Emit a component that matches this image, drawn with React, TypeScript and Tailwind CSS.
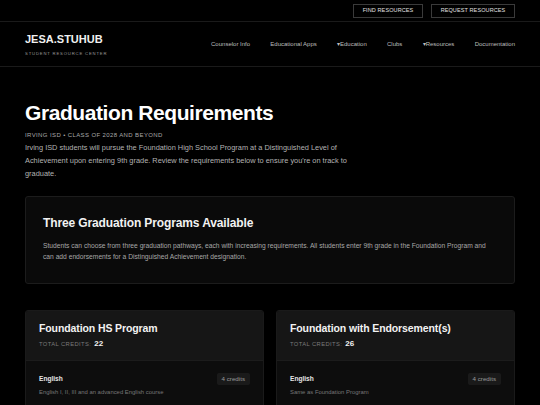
import React from "react";

const font = { fontFamily: '"Liberation Sans", Arial, sans-serif' };

function ProgramCard({ title, credits, desc }: { title: string; credits: string; desc: string }) {
  return (
    <div className="flex-1 rounded-[3px] overflow-hidden border border-[#1a1a1a] bg-[#0d0d0d]">
      <div className="bg-[#161616] px-[13px] pt-[11px] pb-[11px] border-b border-[#1c1c1c]">
        <div className="text-[10.5px] font-bold tracking-[-0.01em] text-[#f2f2f2] leading-[13px]">{title}</div>
        <div className="mt-[4px] flex items-baseline gap-[3px] leading-[10px]">
          <span className="text-[5.8px] tracking-[0.07em] text-[#7a7a7a]">TOTAL CREDITS:</span>
          <span className="text-[8px] font-bold text-[#f2f2f2]">{credits}</span>
        </div>
      </div>
      <div className="px-[13px] pt-[12px] pb-[10px]">
        <div className="flex items-center justify-between">
          <span className="text-[6.6px] font-bold text-[#e6e6e6]">English</span>
          <span className="bg-[#1a1a1a] rounded-[2px] px-[5px] h-[12px] flex items-center text-[6.2px] text-[#9a9a9a] leading-none">4 credits</span>
        </div>
        <div className="mt-[3px] text-[5.9px] text-[#777]">{desc}</div>
      </div>
    </div>
  );
}

export default function App() {
  return (
    <div className="w-[540px] h-[405px] overflow-hidden bg-black text-white" style={font}>
      <div className="h-[22px] border-b border-[#1a1a1a] flex items-center justify-end gap-[8px] pr-[25px]">
        <button className="h-[14px] w-[70px] border border-[#3a3a3a] text-[5.5px] text-[#e0e0e0] tracking-[0.02em] flex items-center justify-center">FIND RESOURCES</button>
        <button className="h-[14px] w-[84px] border border-[#3a3a3a] text-[5.5px] text-[#e0e0e0] tracking-[0.02em] flex items-center justify-center">REQUEST RESOURCES</button>
      </div>
      <div className="h-[45px] border-b border-[#1a1a1a] flex items-center justify-between px-[25px]">
        <div className="mt-[1px]">
          <div className="text-[11px] font-bold text-[#f0f0f0] leading-[13px]">JESA.STUHUB</div>
          <div className="mt-[5px] text-[4.2px] tracking-[0.2em] text-[#9a9a9a] leading-[5px]">STUDENT RESOURCE CENTER</div>
        </div>
        <nav className="flex items-center gap-[20.3px] text-[6px] text-[#bdbdbd] mt-[1px]">
          <span>Counselor Info</span>
          <span>Educational Apps</span>
          <span>▾Education</span>
          <span>Clubs</span>
          <span>▾Resources</span>
          <span>Documentation</span>
        </nav>
      </div>
      <div className="px-[25px] pt-[33px]">
        <h1 className="text-[21px] font-bold tracking-[-0.02em] leading-[26px] text-white">Graduation Requirements</h1>
        <div className="mt-[5px] text-[6px] tracking-[0.065em] text-[#a8a8a8]">IRVING ISD • CLASS OF 2028 AND BEYOND</div>
        <p className="mt-[1px] text-[7.4px] leading-[13px] text-[#b3b3b3] max-w-[345px]">
          Irving ISD students will pursue the Foundation High School Program at a Distinguished Level of Achievement upon entering 9th grade. Review the requirements below to ensure you're on track to graduate.
        </p>
        <div className="mt-[16px] rounded-[3px] border border-[#1c1c1c] bg-[#0a0a0a] px-[17px] pt-[19px] pb-[21px]">
          <h2 className="text-[12px] font-bold tracking-[-0.01em] text-[#f2f2f2] leading-[15px]">Three Graduation Programs Available</h2>
          <p className="mt-[9px] text-[6.7px] leading-[11px] text-[#a8a8a8]">
            Students can choose from three graduation pathways, each with increasing requirements. All students enter 9th grade in the Foundation Program and can add endorsements for a Distinguished Achievement designation.
          </p>
        </div>
        <div className="mt-[26px] flex gap-[12px]">
          <ProgramCard title="Foundation HS Program" credits="22" desc="English I, II, III and an advanced English course" />
          <ProgramCard title="Foundation with Endorsement(s)" credits="26" desc="Same as Foundation Program" />
        </div>
      </div>
    </div>
  );
}
